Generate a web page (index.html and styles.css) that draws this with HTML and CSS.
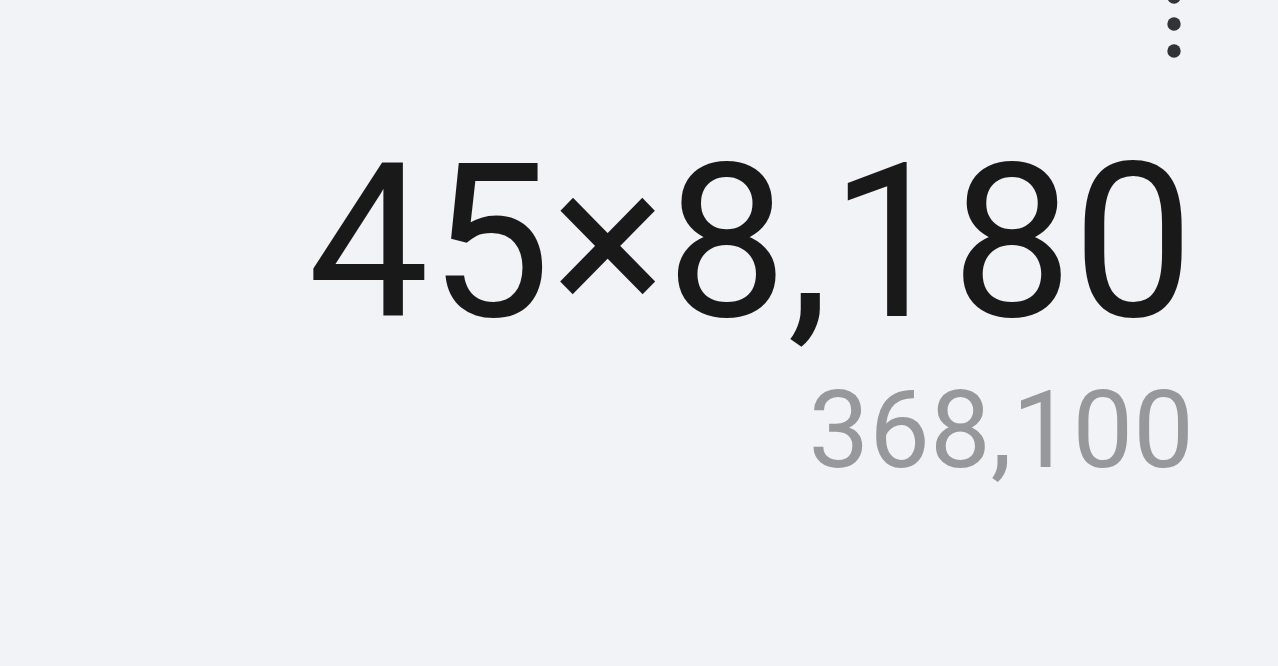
FILE: index.html
```html
<!DOCTYPE html>
<html lang="en">
<head>
  <meta charset="UTF-8" />
  <meta name="viewport" content="width=device-width, initial-scale=1.0"/>
  <title>Calculator</title>
  <link rel="stylesheet" href="styles.css">
</head>
<body>
  <header class="toolbar">
    <button class="menu-btn" type="button" aria-label="More options">
      <svg width="14" height="68" viewBox="0 0 14 68">
        <circle cx="7" cy="7" r="6.7"/>
        <circle cx="7" cy="34" r="6.7"/>
        <circle cx="7" cy="61" r="6.7"/>
      </svg>
    </button>
  </header>
  <main class="display">
    <div class="expression">45×8,180</div>
    <div class="result">368,100</div>
  </main>
</body>
</html>
```

FILE: styles.css
```css
body {
  font-family: Roboto, "Liberation Sans", sans-serif;
  background-color: #f1f3f7;
  margin: 0;
  overflow: hidden;
}
.toolbar {
  display: flex;
  justify-content: flex-end;
  margin-top: -10px;
  padding: 0 97px;
}
.menu-btn {
  display: flex;
  padding: 0;
  border: none;
  background: none;
  cursor: pointer;
}
.menu-btn svg {
  fill: #333335;
}
.display {
  padding: 65px 84px 0;
  text-align: right;
  white-space: nowrap;
}
.expression {
  color: #19191a;
  font-size: 216px;
  line-height: 240px;
}
.result {
  color: #979899;
  font-size: 108px;
  line-height: 134px;
}
```
